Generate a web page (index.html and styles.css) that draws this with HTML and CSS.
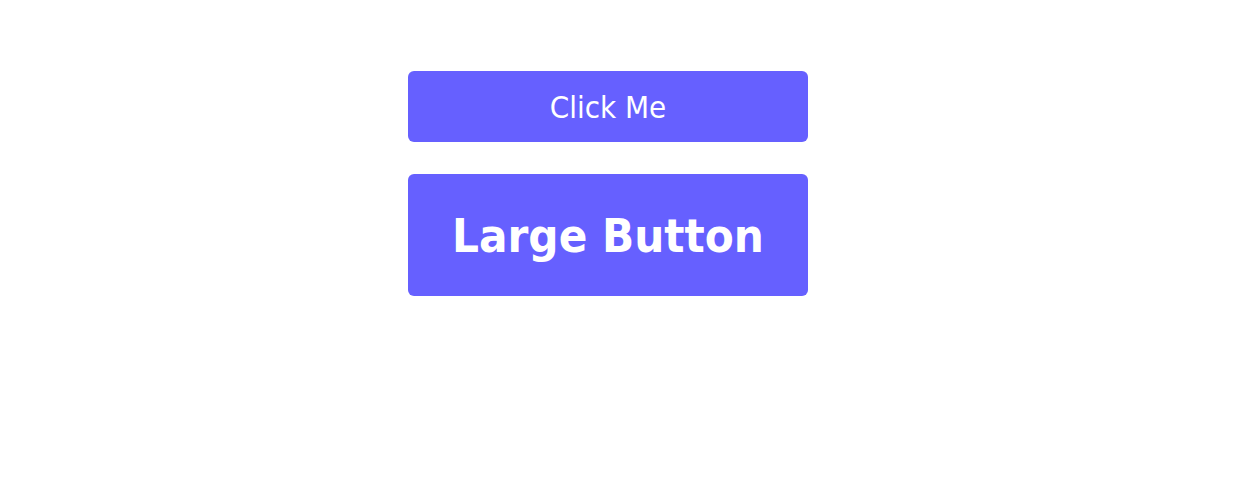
FILE: index.html
```html
<!DOCTYPE html>
<html>
<head>
<meta charset="utf-8">
<link rel="stylesheet" href="styles.css">
</head>
<body>
<main class="stack">
  <button class="btn btn-small">Click Me</button>
  <button class="btn btn-large">Large Button</button>
</main>
</body>
</html>
```
FILE: styles.css
```css
html, body {
  margin: 0;
  padding: 0;
  background: #ffffff;
}
.stack {
  display: flex;
  flex-direction: column;
  align-items: flex-start;
  gap: 32px;
  padding: 71px 0 0 408px;
}
.btn {
  width: 400px;
  border: none;
  border-radius: 6px;
  background: #6660ff;
  color: #ffffff;
  font-family: "DejaVu Sans Condensed", "DejaVu Sans", sans-serif;
  padding: 0;
  margin: 0;
  cursor: pointer;
}
.btn-small {
  height: 71px;
  font-size: 31px;
  font-weight: normal;
}
.btn-large {
  height: 122px;
  font-size: 47px;
  font-weight: bold;
}
```
